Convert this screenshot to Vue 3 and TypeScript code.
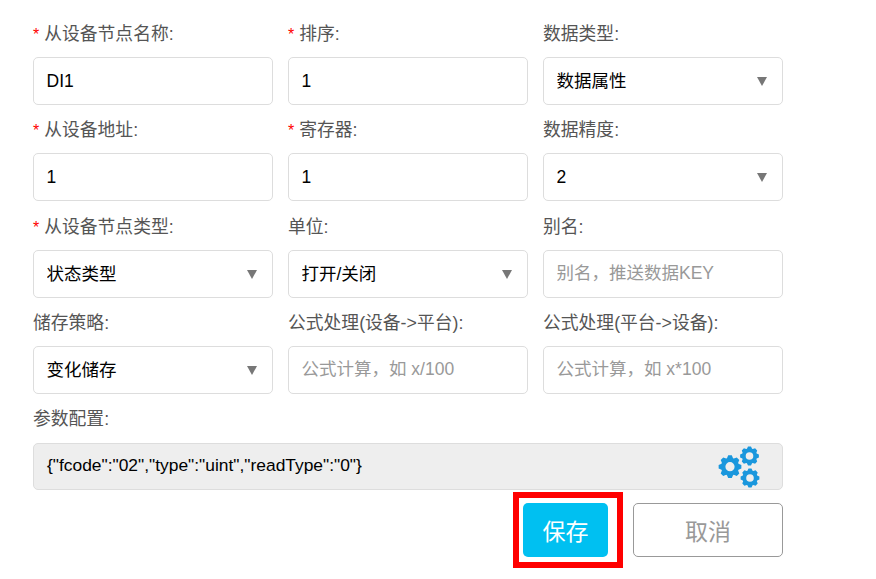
<script setup lang="ts">
type Field = { label: string; required?: boolean; kind: 'input' | 'select'; value?: string; placeholder?: string };

const fields: Field[] = [
  { label: '从设备节点名称:', required: true, kind: 'input', value: 'DI1' },
  { label: '排序:', required: true, kind: 'input', value: '1' },
  { label: '数据类型:', kind: 'select', value: '数据属性' },
  { label: '从设备地址:', required: true, kind: 'input', value: '1' },
  { label: '寄存器:', required: true, kind: 'input', value: '1' },
  { label: '数据精度:', kind: 'select', value: '2' },
  { label: '从设备节点类型:', required: true, kind: 'select', value: '状态类型' },
  { label: '单位:', kind: 'select', value: '打开/关闭' },
  { label: '别名:', kind: 'input', placeholder: '别名，推送数据KEY' },
  { label: '储存策略:', kind: 'select', value: '变化储存' },
  { label: '公式处理(设备->平台):', kind: 'input', placeholder: '公式计算，如 x/100' },
  { label: '公式处理(平台->设备):', kind: 'input', placeholder: '公式计算，如 x*100' },
];

function gear(cx: number, cy: number, outer: number, inner: number, hole: number, teeth: number): string {
  const pts: string[] = [];
  const step = (Math.PI * 2) / teeth;
  for (let i = 0; i < teeth; i++) {
    const a = i * step;
    const w = step * 0.2;
    const seq: [number, number][] = [
      [a - step / 2 + w * 0.3, inner],
      [a - w, outer],
      [a + w, outer],
      [a + step / 2 - w * 0.3, inner],
    ];
    for (const [t, r] of seq) {
      pts.push(`${(cx + r * Math.cos(t)).toFixed(2)} ${(cy + r * Math.sin(t)).toFixed(2)}`);
    }
  }
  const ring = `M${cx - hole} ${cy}a${hole} ${hole} 0 1 0 ${hole * 2} 0a${hole} ${hole} 0 1 0 ${-hole * 2} 0Z`;
  return `M${pts.join('L')}Z${ring}`;
}

const gears = [gear(12, 21.7, 11.5, 9, 4.6, 8), gear(31.5, 11, 9.5, 7.6, 3.8, 8), gear(32, 33, 9.5, 7.6, 3.8, 8)].join('');
</script>

<template>
  <form class="page" @submit.prevent>
    <div class="grid">
      <div v-for="f in fields" :key="f.label" class="field">
        <label class="label"><span v-if="f.required" class="star">*</span>{{ f.label }}</label>
        <input v-if="f.kind === 'input'" class="control" type="text" :value="f.value" :placeholder="f.placeholder" />
        <div v-else class="select-wrap">
          <select class="control select">
            <option>{{ f.value }}</option>
          </select>
          <span class="caret"></span>
        </div>
      </div>
    </div>
    <div class="params">
      <label class="label">参数配置:</label>
      <div class="param-box">
        <span class="param-text">{"fcode":"02","type":"uint","readType":"0"}</span>
        <svg class="gears" width="44" height="44" viewBox="0 0 44 44" aria-hidden="true">
          <path :d="gears" fill="#1a97dd" fill-rule="evenodd" />
        </svg>
      </div>
    </div>
    <div class="actions">
      <div class="highlight">
        <button class="btn save" type="submit">保存</button>
      </div>
      <button class="btn cancel" type="button">取消</button>
    </div>
  </form>
</template>

<style>
html, body { background: #fff; }
</style>

<style scoped>
.page {
  width: 750px;
  padding: 9px 0 0 33px;
  font-family: "Liberation Sans", "Noto Sans CJK SC", sans-serif;
  font-size: 17.5px;
  color: #000;
  box-sizing: content-box;
}
.grid {
  display: grid;
  grid-template-columns: repeat(3, 240px);
  column-gap: 15px;
}
.field { height: 96.33px; }
.label {
  display: block;
  height: 48px;
  line-height: 50px;
  color: #555;
  font-size: 17.8px;
}
.star {
  color: #f00;
  margin-right: 5px;
  font-size: 16px;
}
.control {
  display: block;
  width: 100%;
  height: 48px;
  margin: 0;
  padding: 0 12.5px;
  box-sizing: border-box;
  border: 1px solid #ddd;
  border-radius: 5px;
  background: #fff;
  font: inherit;
  color: #000;
  outline: none;
}
.control::placeholder { color: #999; opacity: 1; }
.select-wrap { position: relative; }
.select { appearance: none; }
.caret {
  position: absolute;
  right: 16px;
  top: 20px;
  width: 0;
  height: 0;
  border-left: 5px solid transparent;
  border-right: 5px solid transparent;
  border-top: 9px solid #777;
}
.param-box {
  display: flex;
  align-items: center;
  justify-content: space-between;
  height: 47px;
  margin-top: 1px;
  padding: 0 20px 0 13px;
  box-sizing: border-box;
  border: 1px solid #ddd;
  border-radius: 5px;
  background: #eee;
  color: #000;
  font-size: 17.4px;
}
.param-text { margin-bottom: 2px; }
.gears { flex: none; margin-top: 1px; }
.actions {
  display: flex;
  justify-content: flex-end;
  align-items: center;
  gap: 10px;
  margin-top: 2px;
}
.highlight {
  padding: 5px 9px 5px 4px;
  border: 6px solid #f00;
}
.btn {
  display: block;
  height: 54px;
  border-radius: 5px;
  font: inherit;
  font-size: 23px;
  padding: 0;
}
.save {
  width: 85px;
  border: none;
  background: #00c0f1;
  color: #fff;
}
.cancel {
  width: 150px;
  background: #fff;
  border: 1px solid #999;
  color: #999;
}
</style>
